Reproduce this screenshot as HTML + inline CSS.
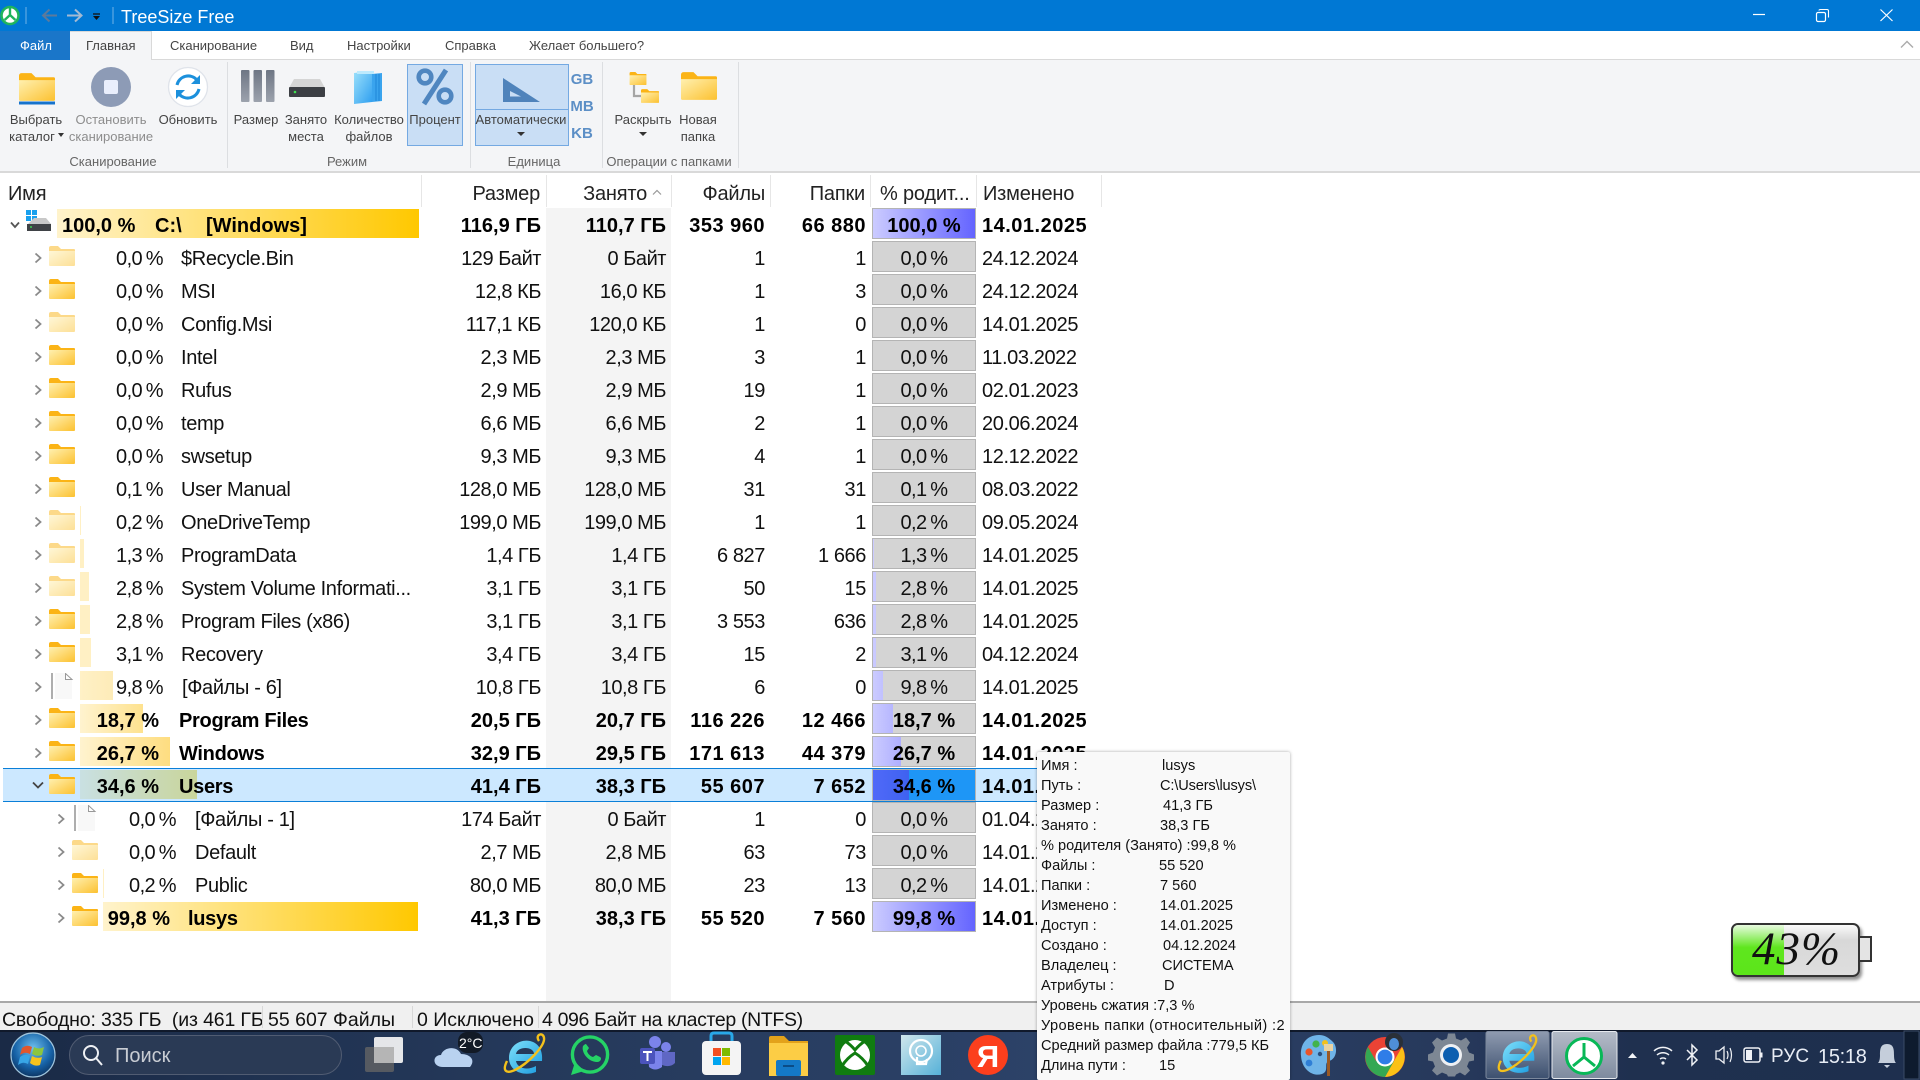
<!DOCTYPE html>
<html lang="ru"><head><meta charset="utf-8"><title>TreeSize Free</title>
<style>
*{box-sizing:border-box}
html,body{margin:0;padding:0;width:1920px;height:1080px;overflow:hidden;background:#fff;font-family:"Liberation Sans","Noto Sans CJK SC",sans-serif;color:#111}
.a{position:absolute}
svg{position:absolute;overflow:visible}
#title{left:0;top:0;width:1920px;height:31px;background:#0078d4}
#title span{position:absolute;left:121px;top:3px;font-size:18px;line-height:29px;color:#fff}
#tabs{left:0;top:31px;width:1920px;height:29px;background:#fff;border-bottom:1px solid #d9d9d9}
.tab{position:absolute;top:0;font-size:13px;line-height:29px;color:#444;white-space:nowrap}
#ribbon{left:0;top:60px;width:1920px;height:113px;background:#f4f5f7;border-bottom:2px solid #d9d9d9}
.sep{position:absolute;width:1px;top:62px;height:106px;background:#dcdee1}
.l{position:absolute;font-size:13px;line-height:18px;color:#444;text-align:center;white-space:nowrap;transform:translateX(-50%)}
.g{position:absolute;top:153px;font-size:13px;line-height:18px;color:#666;white-space:nowrap;transform:translateX(-50%)}
.act{position:absolute;background:#c9def5;border:1px solid #74a9e2}
.u{position:absolute;font-size:15px;line-height:20px;font-weight:700;color:#5c8fc6;transform:translateX(-50%)}
.h{position:absolute;top:175px;font-size:20px;line-height:38px;color:#222;white-space:nowrap;letter-spacing:-.2px}
.hs{position:absolute;top:175px;height:32px;width:1px;background:#e6e6e6}
#gray{left:546px;top:208px;width:125px;height:793px;background:#f4f4f4}
.r{position:absolute;left:0;width:1101px;height:33px;font-size:20px;line-height:36px;white-space:nowrap;color:#111}
.r.b{font-weight:700;color:#000}
.r.sel{background:#cce8ff;left:3px;width:1098px;top:768px;height:34px;border-top:1px solid #0a7fd8;border-bottom:1px solid #0a7fd8;margin:0}
.r>*{position:absolute}
.bar{top:1px;height:29px}
.pt{top:0;text-align:right;letter-spacing:-.6px;word-spacing:-1.2px;margin-left:1px}
.b .pt{letter-spacing:0;word-spacing:0;margin-left:0}
.nm{top:0;letter-spacing:-.35px}
.b .nm{letter-spacing:-.3px}
.s,.o,.f,.d{top:0;text-align:right}
.s,.o{letter-spacing:-.45px}
.f,.d,.m{letter-spacing:-.4px}
.b .s,.b .o{letter-spacing:0}
.b .f,.b .d,.b .m{letter-spacing:.5px}
.s{left:421px;width:120px}.o{left:546px;width:120px}.f{left:671px;width:94px}.d{left:770px;width:96px}
.m{left:982px;top:0}
.p{left:872px;top:0;width:104px;height:31px;background:#d4d4d4;border:1px solid #b4b4b4;text-align:center;line-height:34px}
.p i{position:absolute;left:0;top:0;height:29px;background:linear-gradient(90deg,#cbcbff,#6464ff) 0 0/102px 100% no-repeat}
.p b{position:relative;font-weight:inherit;letter-spacing:-.6px;word-spacing:-1.2px}
.b .p b{letter-spacing:0;word-spacing:0}
.fo{left:49px;top:5px;width:26px;height:20px}
.fl{opacity:.5}
.ch{left:34px;top:11px;width:8px;height:12px}
.f2 .ch{left:57px}.f2 .fo{left:72px}
#statusline{left:0;top:1001px;width:1920px;height:2px;background:#a8a8a8}
#status{left:0;top:1003px;width:1920px;height:27px;background:#f0f0f0;font-size:19.5px;line-height:34px;color:#111;white-space:nowrap}
#status span{position:absolute;top:0}
#status u{position:absolute;top:3px;width:1px;height:22px;background:#d8d8d8;text-decoration:none}
#task{left:0;top:1030px;width:1920px;height:50px;background:linear-gradient(90deg,#1a2a46 0,#243859 25%,#2c4268 55%,#27395c 75%,#1f304f 85%,#1e2f4e 100%);border-top:2px solid #10192b}
#tip{left:1037px;top:752px;width:253px;height:328px;background:#f9f9f9;box-shadow:0 0 3px rgba(0,0,0,.35);font-size:14.6px;color:#111;border-radius:2px;z-index:5}
#tip div{position:absolute;left:4px;height:20px;line-height:22px;white-space:nowrap}
#tip div b{position:absolute;top:0;font-weight:400}
.ti{position:absolute;color:#e8edf5;white-space:nowrap}
</style></head><body>
<svg width="0" height="0" style="position:absolute"><defs>
<linearGradient id="fg" x1="0" y1="0" x2="1" y2="1"><stop offset="0" stop-color="#fff0b0"/><stop offset="1" stop-color="#fcc130"/></linearGradient>
<symbol id="fold" viewBox="0 0 26 20"><path d="M0 2Q0 0 2 0H9L12 3H25Q26 3 26 4V6H0Z" fill="#fbb416"/><path d="M0 5H26V19Q26 20 25 20H1Q0 20 0 19Z" fill="url(#fg)"/></symbol>
<symbol id="chev" viewBox="0 0 8 12"><path d="M1.5 1.5 6.5 6 1.5 10.5" fill="none" stroke="#8a8a8a" stroke-width="1.8"/></symbol>
<symbol id="filei" viewBox="0 0 24 26"><path d="M1 0V26" stroke="#777" stroke-width="1.2"/><path d="M4 0H14L21 6V26H4Z" fill="#f8f8f8"/><path d="M14.5 0.5V6.5H21L14.5 .5Z" fill="#fff" stroke="#999" stroke-width="1"/></symbol>
</defs></svg>

<div class="a" id="title"><span>TreeSize Free</span></div>
<svg style="left:0;top:0" width="130" height="31">
<circle cx="10" cy="15.5" r="8.5" fill="#fff" stroke="#1fb45c" stroke-width="2.6"/><path d="M10 8V15M10 15 4.6 20M10 15 15.4 20" stroke="#1fb45c" stroke-width="2.4" fill="none"/>
<path d="M26 7V24" stroke="#6fb2e6"/><path d="M57 15.5H44M49.5 9.5 43 15.5 49.5 21.5" stroke="#5c7a9c" stroke-width="2" fill="none"/>
<path d="M67 15.5H81M75 9.5 81.5 15.5 75 21.5" stroke="#a3bad3" stroke-width="2" fill="none"/>
<path d="M93 14H100" stroke="#111" stroke-width="1.3"/><path d="M93 16H100L96.5 20Z" fill="#111"/><path d="M113 7V24" stroke="#6fb2e6"/></svg>
<svg style="left:1740px;top:0" width="170" height="31">
<path d="M13 14.5H25" stroke="#fff" stroke-width="1.2"/>
<rect x="76.5" y="12.5" width="9" height="9" rx="1.5" fill="none" stroke="#fff" stroke-width="1.2"/><path d="M79 10.5Q79 9.5 80.5 9.5H87Q88.5 9.5 88.5 11V17.5" fill="none" stroke="#fff" stroke-width="1.1"/>
<path d="M140.5 9.5 152.5 21M152.5 9.5 140.5 21" stroke="#fff" stroke-width="1.2"/></svg>

<div class="a" id="tabs">
<div class="a" style="left:0;top:0;width:70px;height:29px;background:#1a76c9"></div>
<div class="tab" style="left:20px;color:#fff">Файл</div>
<div class="a" style="left:70px;top:0;width:82px;height:29px;background:#f4f5f7;border-right:1px solid #d9d9d9;border-top:1px solid #d9d9d9"></div>
<div class="tab" style="left:86px">Главная</div>
<div class="tab" style="left:170px">Сканирование</div>
<div class="tab" style="left:290px">Вид</div>
<div class="tab" style="left:347px">Настройки</div>
<div class="tab" style="left:445px">Справка</div>
<div class="tab" style="left:529px">Желает большего?</div>
<svg style="left:1900px;top:8px" width="14" height="10"><path d="M1 8.5 7 2.5 13 8.5" fill="none" stroke="#aaa" stroke-width="1.4"/></svg>
</div>
<div class="a" id="ribbon"></div>
<div class="sep" style="left:227px"></div><div class="sep" style="left:470px"></div><div class="sep" style="left:602px"></div><div class="sep" style="left:738px"></div>
<div class="act" style="left:407px;top:64px;width:56px;height:82px"></div>
<div class="act" style="left:475px;top:64px;width:94px;height:82px"></div>
<div class="a" style="left:476px;top:109px;width:92px;height:1px;background:#74a9e2"></div>

<svg style="left:0;top:60px" width="740" height="60">
<defs><linearGradient id="bb" x1="0" y1="0" x2="0" y2="1"><stop offset="0" stop-color="#6e7684"/><stop offset="1" stop-color="#9ca2ad"/></linearGradient>
<linearGradient id="cu" x1="0" y1="0" x2="1" y2="1"><stop offset="0" stop-color="#9be0fb"/><stop offset="1" stop-color="#2f9ff0"/></linearGradient></defs>
<use href="#fold" x="19" y="13" width="36" height="28"/><rect x="19" y="41.5" width="36" height="3" fill="#1673cc"/>
<circle cx="111" cy="27" r="20" fill="#8d9bb6"/><rect x="104" y="20" width="14" height="14" rx="2" fill="#e9eefc"/>
<circle cx="188" cy="27" r="19.5" fill="#fff" stroke="#dfe3ea" stroke-width="1.3"/>
<path d="M177 25A11.5 11.5 0 0 1 197 20" fill="none" stroke="#1c90dc" stroke-width="3"/><path d="M200 15V24H191Z" fill="#1c90dc"/>
<path d="M199 29A11.5 11.5 0 0 1 179 34" fill="none" stroke="#1c90dc" stroke-width="3"/><path d="M176 39V30H185Z" fill="#1c90dc"/>
<rect x="241" y="10" width="8.5" height="32" rx="1" fill="url(#bb)"/><rect x="253.5" y="10" width="8.5" height="32" rx="1" fill="url(#bb)"/><rect x="266" y="10" width="8.5" height="32" rx="1" fill="url(#bb)"/>
<path d="M294 19H320L325 28H289Z" fill="#d5d5d5"/><rect x="289" y="27" width="36" height="10" rx="1" fill="#3c3f44"/><circle cx="295" cy="32" r="1.3" fill="#3fe04f"/>
<path d="M354 13 372 11V42L354 44Z" fill="url(#cu)"/><path d="M372 14 382 13V41L372 42Z" fill="#3aa4ee"/><path d="M357 11 374 11V14H357Z" fill="#bdeafd"/><path d="M376 14V41" stroke="#1d86d8"/><path d="M379 14V41" stroke="#1d86d8"/>
<circle cx="425" cy="17" r="6.3" fill="none" stroke="#4f86c0" stroke-width="4.6"/><circle cx="445" cy="36" r="6.3" fill="none" stroke="#4f86c0" stroke-width="4.6"/><path d="M446 10 424 44" stroke="#4f86c0" stroke-width="5"/>
<path d="M503 18V42H540Z M510 31 521 36.5H510Z" fill="#4f83bb" fill-rule="evenodd"/>
<path d="M634 25V36H642" fill="none" stroke="#a5a5a5" stroke-width="2.2"/>
<use href="#fold" x="629" y="12" width="18" height="13"/><use href="#fold" x="641" y="29" width="18" height="14"/>
<use href="#fold" x="681" y="12" width="36" height="28"/>
</svg>
<div class="l" style="left:36px;top:111px">Выбрать</div><div class="l" style="left:32px;top:128px">каталог</div>
<div class="l" style="left:111px;top:111px;color:#8d8d8d">Остановить</div><div class="l" style="left:111px;top:128px;color:#8d8d8d">сканирование</div>
<div class="l" style="left:188px;top:111px">Обновить</div>
<div class="l" style="left:256px;top:111px">Размер</div>
<div class="l" style="left:306px;top:111px">Занято</div><div class="l" style="left:306px;top:128px">места</div>
<div class="l" style="left:369px;top:111px">Количество</div><div class="l" style="left:369px;top:128px">файлов</div>
<div class="l" style="left:435px;top:111px">Процент</div>
<div class="l" style="left:521px;top:111px">Автоматически</div>
<div class="l" style="left:643px;top:111px">Раскрыть</div>
<div class="l" style="left:698px;top:111px">Новая</div><div class="l" style="left:698px;top:128px">папка</div>
<svg style="left:0;top:130px" width="740" height="12"><path d="M517 2H525L521 6ZM639 2H647L643 6ZM58 3H64L61 7Z" fill="#333"/></svg>
<div class="u" style="left:582px;top:70px">GB</div><div class="u" style="left:582px;top:97px">MB</div><div class="u" style="left:582px;top:124px">KB</div>
<div class="g" style="left:113px">Сканирование</div><div class="g" style="left:347px">Режим</div><div class="g" style="left:534px">Единица</div><div class="g" style="left:669px">Операции с папками</div>

<div class="h" style="left:8px">Имя</div>
<div class="h" style="right:1380px">Размер</div>
<div class="h" style="right:1273px">Занято</div>
<svg style="left:652px;top:189px" width="10" height="7"><path d="M1 5.5 5 1.5 9 5.5" fill="none" stroke="#999" stroke-width="1.2"/></svg>
<div class="h" style="right:1155px">Файлы</div>
<div class="h" style="right:1055px">Папки</div>
<div class="h" style="left:880px">% родит...</div>
<div class="h" style="left:983px">Изменено</div>
<div class="hs" style="left:421px"></div><div class="hs" style="left:546px"></div><div class="hs" style="left:671px"></div><div class="hs" style="left:770px"></div><div class="hs" style="left:870px"></div><div class="hs" style="left:976px"></div><div class="hs" style="left:1101px"></div>
<div class="a" id="gray"></div>

<!-- root -->
<div class="r b" style="top:208px">
<div class="bar" style="left:57px;width:362px;background:linear-gradient(90deg,#fff3cc,#ffc800)"></div>
<svg style="left:10px;top:13px" width="10" height="8"><path d="M1 1.5 5 6 9 1.5" fill="none" stroke="#555" stroke-width="1.8"/></svg>
<svg style="left:26px;top:2px" width="26" height="22"><rect x="0" y="0" width="5" height="5" fill="#18a0ee"/><rect x="6" y="0" width="5" height="5" fill="#18a0ee"/><rect x="0" y="6" width="5" height="5" fill="#18a0ee"/><rect x="6" y="6" width="5" height="5" fill="#18a0ee"/><path d="M2 14 8 8H20L25 14Z" fill="#c8c8c8"/><rect x="1" y="14" width="24" height="7" fill="#3f4246"/><circle cx="5" cy="17" r="1" fill="#38d050"/></svg>
<span class="nm" style="left:62px;letter-spacing:0">100,0 %</span><span class="nm" style="left:155px;letter-spacing:0">C:\</span><span class="nm" style="left:206px;letter-spacing:0">[Windows]</span>
<span class="s">116,9 ГБ</span><span class="o">110,7 ГБ</span><span class="f">353 960</span><span class="d">66 880</span>
<div class="p"><i style="width:102px"></i><b>100,0 %</b></div><span class="m">14.01.2025</span></div>

<div class="r" style="top:241px"><svg class="ch"><use href="#chev" width="8" height="12"/></svg><svg class="fo fl"><use href="#fold" width="26" height="20"/></svg>
<span class="pt" style="left:80px;width:82px">0,0 %</span><span class="nm" style="left:181px">$Recycle.Bin</span><span class="s">129 Байт</span><span class="o">0 Байт</span><span class="f">1</span><span class="d">1</span><div class="p"><b>0,0 %</b></div><span class="m">24.12.2024</span></div>
<div class="r" style="top:274px"><svg class="ch"><use href="#chev" width="8" height="12"/></svg><svg class="fo"><use href="#fold" width="26" height="20"/></svg>
<span class="pt" style="left:80px;width:82px">0,0 %</span><span class="nm" style="left:181px">MSI</span><span class="s">12,8 КБ</span><span class="o">16,0 КБ</span><span class="f">1</span><span class="d">3</span><div class="p"><b>0,0 %</b></div><span class="m">24.12.2024</span></div>
<div class="r" style="top:307px"><svg class="ch"><use href="#chev" width="8" height="12"/></svg><svg class="fo fl"><use href="#fold" width="26" height="20"/></svg>
<span class="pt" style="left:80px;width:82px">0,0 %</span><span class="nm" style="left:181px">Config.Msi</span><span class="s">117,1 КБ</span><span class="o">120,0 КБ</span><span class="f">1</span><span class="d">0</span><div class="p"><b>0,0 %</b></div><span class="m">14.01.2025</span></div>
<div class="r" style="top:340px"><svg class="ch"><use href="#chev" width="8" height="12"/></svg><svg class="fo"><use href="#fold" width="26" height="20"/></svg>
<span class="pt" style="left:80px;width:82px">0,0 %</span><span class="nm" style="left:181px">Intel</span><span class="s">2,3 МБ</span><span class="o">2,3 МБ</span><span class="f">3</span><span class="d">1</span><div class="p"><b>0,0 %</b></div><span class="m">11.03.2022</span></div>
<div class="r" style="top:373px"><svg class="ch"><use href="#chev" width="8" height="12"/></svg><svg class="fo"><use href="#fold" width="26" height="20"/></svg>
<span class="pt" style="left:80px;width:82px">0,0 %</span><span class="nm" style="left:181px">Rufus</span><span class="s">2,9 МБ</span><span class="o">2,9 МБ</span><span class="f">19</span><span class="d">1</span><div class="p"><b>0,0 %</b></div><span class="m">02.01.2023</span></div>
<div class="r" style="top:406px"><svg class="ch"><use href="#chev" width="8" height="12"/></svg><svg class="fo"><use href="#fold" width="26" height="20"/></svg>
<span class="pt" style="left:80px;width:82px">0,0 %</span><span class="nm" style="left:181px">temp</span><span class="s">6,6 МБ</span><span class="o">6,6 МБ</span><span class="f">2</span><span class="d">1</span><div class="p"><b>0,0 %</b></div><span class="m">20.06.2024</span></div>
<div class="r" style="top:439px"><svg class="ch"><use href="#chev" width="8" height="12"/></svg><svg class="fo"><use href="#fold" width="26" height="20"/></svg>
<span class="pt" style="left:80px;width:82px">0,0 %</span><span class="nm" style="left:181px">swsetup</span><span class="s">9,3 МБ</span><span class="o">9,3 МБ</span><span class="f">4</span><span class="d">1</span><div class="p"><b>0,0 %</b></div><span class="m">12.12.2022</span></div>
<div class="r" style="top:472px"><svg class="ch"><use href="#chev" width="8" height="12"/></svg><svg class="fo"><use href="#fold" width="26" height="20"/></svg>
<span class="pt" style="left:80px;width:82px">0,1 %</span><span class="nm" style="left:181px">User Manual</span><span class="s">128,0 МБ</span><span class="o">128,0 МБ</span><span class="f">31</span><span class="d">31</span><div class="p"><b>0,1 %</b></div><span class="m">08.03.2022</span></div>
<div class="r" style="top:505px"><div class="bar" style="left:80px;width:1px;background:#fff0c4"></div><svg class="ch"><use href="#chev" width="8" height="12"/></svg><svg class="fo fl"><use href="#fold" width="26" height="20"/></svg>
<span class="pt" style="left:80px;width:82px">0,2 %</span><span class="nm" style="left:181px">OneDriveTemp</span><span class="s">199,0 МБ</span><span class="o">199,0 МБ</span><span class="f">1</span><span class="d">1</span><div class="p"><b>0,2 %</b></div><span class="m">09.05.2024</span></div>
<div class="r" style="top:538px"><div class="bar" style="left:80px;width:4px;background:#fff0c4"></div><svg class="ch"><use href="#chev" width="8" height="12"/></svg><svg class="fo fl"><use href="#fold" width="26" height="20"/></svg>
<span class="pt" style="left:80px;width:82px">1,3 %</span><span class="nm" style="left:181px">ProgramData</span><span class="s">1,4 ГБ</span><span class="o">1,4 ГБ</span><span class="f">6 827</span><span class="d">1 666</span><div class="p"><i style="width:1px"></i><b>1,3 %</b></div><span class="m">14.01.2025</span></div>
<div class="r" style="top:571px"><div class="bar" style="left:80px;width:9px;background:#fff0c4"></div><svg class="ch"><use href="#chev" width="8" height="12"/></svg><svg class="fo fl"><use href="#fold" width="26" height="20"/></svg>
<span class="pt" style="left:80px;width:82px">2,8 %</span><span class="nm" style="left:181px">System Volume Informati...</span><span class="s">3,1 ГБ</span><span class="o">3,1 ГБ</span><span class="f">50</span><span class="d">15</span><div class="p"><i style="width:3px"></i><b>2,8 %</b></div><span class="m">14.01.2025</span></div>
<div class="r" style="top:604px"><div class="bar" style="left:80px;width:10px;background:#fff0c4"></div><svg class="ch"><use href="#chev" width="8" height="12"/></svg><svg class="fo"><use href="#fold" width="26" height="20"/></svg>
<span class="pt" style="left:80px;width:82px">2,8 %</span><span class="nm" style="left:181px">Program Files (x86)</span><span class="s">3,1 ГБ</span><span class="o">3,1 ГБ</span><span class="f">3 553</span><span class="d">636</span><div class="p"><i style="width:3px"></i><b>2,8 %</b></div><span class="m">14.01.2025</span></div>
<div class="r" style="top:637px"><div class="bar" style="left:80px;width:11px;background:#fff0c4"></div><svg class="ch"><use href="#chev" width="8" height="12"/></svg><svg class="fo"><use href="#fold" width="26" height="20"/></svg>
<span class="pt" style="left:80px;width:82px">3,1 %</span><span class="nm" style="left:181px">Recovery</span><span class="s">3,4 ГБ</span><span class="o">3,4 ГБ</span><span class="f">15</span><span class="d">2</span><div class="p"><i style="width:3px"></i><b>3,1 %</b></div><span class="m">04.12.2024</span></div>
<div class="r" style="top:670px"><div class="bar" style="left:80px;width:33px;background:linear-gradient(90deg,#fff1c6,#fdebb8)"></div><svg class="ch"><use href="#chev" width="8" height="12"/></svg><svg style="left:51px;top:3px" width="24" height="26"><use href="#filei" width="24" height="26"/></svg>
<span class="pt" style="left:80px;width:82px">9,8 %</span><span class="nm" style="left:182px">[Файлы - 6]</span><span class="s">10,8 ГБ</span><span class="o">10,8 ГБ</span><span class="f">6</span><span class="d">0</span><div class="p"><i style="width:10px"></i><b>9,8 %</b></div><span class="m">14.01.2025</span></div>
<div class="r b" style="top:703px"><div class="bar" style="left:80px;width:63px;background:linear-gradient(90deg,#fff3cf,#fee28f)"></div><svg class="ch"><use href="#chev" width="8" height="12"/></svg><svg class="fo"><use href="#fold" width="26" height="20"/></svg>
<span class="pt" style="left:80px;width:79px">18,7 %</span><span class="nm" style="left:179px">Program Files</span><span class="s">20,5 ГБ</span><span class="o">20,7 ГБ</span><span class="f">116 226</span><span class="d">12 466</span><div class="p"><i style="width:20px"></i><b>18,7 %</b></div><span class="m">14.01.2025</span></div>
<div class="r b" style="top:736px"><div class="bar" style="left:80px;width:90px;background:linear-gradient(90deg,#fff3cf,#fedd80)"></div><svg class="ch"><use href="#chev" width="8" height="12"/></svg><svg class="fo"><use href="#fold" width="26" height="20"/></svg>
<span class="pt" style="left:80px;width:79px">26,7 %</span><span class="nm" style="left:179px">Windows</span><span class="s">32,9 ГБ</span><span class="o">29,5 ГБ</span><span class="f">171 613</span><span class="d">44 379</span><div class="p"><i style="width:28px"></i><b>26,7 %</b></div><span class="m">14.01.2025</span></div>

<div class="r b sel" style="background:#cce8ff;line-height:36px">
<div style="left:77px;top:1px;width:117px;height:29px;background:linear-gradient(90deg,#c9e0e2,#c9d59b)"></div>
<svg style="left:29px;top:12px" width="12" height="8"><path d="M1 1.5 6 6.5 11 1.5" fill="none" stroke="#444" stroke-width="1.8"/></svg>
<svg style="left:46px;top:5px" width="26" height="20"><use href="#fold" width="26" height="20"/></svg>
<span class="pt" style="left:77px;width:79px">34,6 %</span><span class="nm" style="left:176px">Users</span>
<span class="s" style="left:418px">41,4 ГБ</span><span class="o" style="left:543px">38,3 ГБ</span><span class="f" style="left:668px">55 607</span><span class="d" style="left:767px">7 652</span>
<div class="p" style="left:869px;top:0;background:#1e96f6;line-height:34px;height:32px"><i style="width:36px;height:30px;background:linear-gradient(90deg,#5069f8,#3f62f0)"></i><b>34,6 %</b></div><span class="m" style="left:979px">14.01.2025</span></div>

<div class="r f2" style="top:802px"><svg class="ch"><use href="#chev" width="8" height="12"/></svg><svg style="left:74px;top:3px" width="24" height="26"><use href="#filei" width="24" height="26"/></svg>
<span class="pt" style="left:100px;width:75px">0,0 %</span><span class="nm" style="left:195px">[Файлы - 1]</span><span class="s">174 Байт</span><span class="o">0 Байт</span><span class="f">1</span><span class="d">0</span><div class="p"><b>0,0 %</b></div><span class="m">01.04.2024</span></div>
<div class="r f2" style="top:835px"><svg class="ch"><use href="#chev" width="8" height="12"/></svg><svg class="fo fl"><use href="#fold" width="26" height="20"/></svg>
<span class="pt" style="left:100px;width:75px">0,0 %</span><span class="nm" style="left:195px">Default</span><span class="s">2,7 МБ</span><span class="o">2,8 МБ</span><span class="f">63</span><span class="d">73</span><div class="p"><b>0,0 %</b></div><span class="m">14.01.2025</span></div>
<div class="r f2" style="top:868px"><div class="bar" style="left:103px;width:1px;background:#fff0c4"></div><svg class="ch"><use href="#chev" width="8" height="12"/></svg><svg class="fo"><use href="#fold" width="26" height="20"/></svg>
<span class="pt" style="left:100px;width:75px">0,2 %</span><span class="nm" style="left:195px">Public</span><span class="s">80,0 МБ</span><span class="o">80,0 МБ</span><span class="f">23</span><span class="d">13</span><div class="p"><b>0,2 %</b></div><span class="m">14.01.2025</span></div>
<div class="r b f2" style="top:901px"><div class="bar" style="left:103px;width:315px;background:linear-gradient(90deg,#fff3cc,#ffc800)"></div><svg class="ch"><use href="#chev" width="8" height="12"/></svg><svg class="fo"><use href="#fold" width="26" height="20"/></svg>
<span class="pt" style="left:100px;width:70px">99,8 %</span><span class="nm" style="left:188px">lusys</span><span class="s">41,3 ГБ</span><span class="o">38,3 ГБ</span><span class="f">55 520</span><span class="d">7 560</span><div class="p"><i style="width:102px"></i><b>99,8 %</b></div><span class="m">14.01.2025</span></div>

<!-- battery widget -->
<div class="a" style="left:1731px;top:923px;width:129px;height:54px;border:2px solid #333;border-radius:7px;background:linear-gradient(180deg,#fafafa 0,#d8d8d8 30%,#dedede 100%);box-shadow:2px 3px 3px rgba(0,0,0,.45);overflow:hidden">
<div class="a" style="left:0;top:0;width:51px;height:50px;background:linear-gradient(180deg,#e8fbe0 0,#5fe61e 45%,#5ce51a 100%)"></div></div>
<div class="a" style="left:1860px;top:936px;width:12px;height:26px;border:2px solid #333;border-left:0;background:#e4e4e4"></div>
<div class="a" style="left:1752px;top:921px;font:italic 47px/56px 'Liberation Serif',serif;color:#111;letter-spacing:1px;white-space:nowrap">43%</div>

<div class="a" id="statusline"></div>
<div class="a" id="status">
<span style="left:2px;letter-spacing:-.15px">Свободно: 335 ГБ&nbsp; (из 461 ГБ</span><u style="left:262px"></u>
<span style="left:268px">55 607 Файлы</span><u style="left:412px"></u>
<span style="left:417px">0 Исключено</span><u style="left:538px"></u>
<span style="left:542px;letter-spacing:-.35px">4 096 Байт на кластер (NTFS)</span></div>

<div class="a" id="task"></div>
<svg style="left:0;top:1030px" width="1920" height="50">
<defs>
<radialGradient id="orb" cx=".5" cy=".35" r=".7"><stop offset="0" stop-color="#6fc0ee"/><stop offset=".6" stop-color="#1763a8"/><stop offset="1" stop-color="#0b2c55"/></radialGradient>
<linearGradient id="ie" x1="0" y1="0" x2="1" y2="1"><stop offset="0" stop-color="#7fe0fa"/><stop offset="1" stop-color="#1a9be0"/></linearGradient>
<linearGradient id="app" x1="0" y1="0" x2="1" y2="1"><stop offset="0" stop-color="#cfe6ec"/><stop offset="1" stop-color="#56b1d8"/></linearGradient>
<linearGradient id="ab" x1="0" y1="0" x2="0" y2="1"><stop offset="0" stop-color="#8f9bb0"/><stop offset="1" stop-color="#3d506f"/></linearGradient>
<linearGradient id="ab2" x1="0" y1="0" x2="0" y2="1"><stop offset="0" stop-color="#b5bcc8"/><stop offset="1" stop-color="#7d8a9e"/></linearGradient>
<symbol id="ieic" viewBox="0 0 44 44"><path d="M35 28H13C14 35 24 38 33 33V39C20 44 6 38 6 25 6 12 18 6 27 8 36 10 40 18 39 28ZM31 21C31 13 14 13 13 21Z" fill="url(#ie)" fill-rule="evenodd"/><path d="M36 8C31 1 42 -2 41 7 40 14 26 30 12 37 3 41 -1 38 4 28" fill="none" stroke="#f3c11c" stroke-width="2.4"/></symbol>
</defs>
<circle cx="33" cy="25" r="22" fill="url(#orb)" stroke="#9fc4dc" stroke-width="1.2"/>
<path d="M22 18Q27 14 32 17L30 24Q25 21 20 25Z" fill="#e2572b"/><path d="M34 17Q39 20 44 17L42 25Q37 27 32 24Z" fill="#8cc63f"/><path d="M20 27Q25 23 30 26L28 34Q23 31 18 35Z" fill="#38a6e6"/><path d="M32 26Q37 29 42 27L40 35Q35 37 30 33Z" fill="#f7c31c"/>
<rect x="69.5" y="5.5" width="272" height="39" rx="19.5" fill="#2a3a55" stroke="#515c72"/>
<circle cx="91" cy="23" r="7" fill="none" stroke="#eef0f4" stroke-width="2"/><path d="M96 28 102 35" stroke="#eef0f4" stroke-width="2"/>
<rect x="365" y="17" width="29" height="25" fill="#565a61" rx="2"/><rect x="374" y="7" width="29" height="26" fill="#f4f4f4" fill-opacity=".93" rx="2"/><rect x="374" y="17" width="20" height="16" fill="#b5b5b5"/>
<path d="M443 37C432 37 432 25 441 25 443 17 457 15 461 24 470 24 476 30 470 37Z" fill="#b9d2f0"/><rect x="458" y="2" width="25" height="21" rx="9" fill="#121a26"/>
<use href="#ieic" x="503" y="3" width="44" height="44"/>
<circle cx="590" cy="24.5" r="17.6" fill="none" stroke="#25d366" stroke-width="3.4"/><path d="M575 32 571 45 584 41Z" fill="#25d366"/><path d="M583 16C581 22 588 32 597 32 601 32 602 28 600 27L596 25 593 27C590 26 588 24 587 21L589 18 586 14C585 14 584 15 583 16Z" fill="#25d366"/>
<circle cx="666" cy="17" r="5" fill="#7b83eb"/><circle cx="655" cy="12" r="6" fill="#7b83eb"/><path d="M648 21H662V37Q655 42 649 37Z" fill="#7b83eb"/><path d="M662 22H675V33Q670 38 662 35Z" fill="#5f67c4"/><rect x="640" y="18" width="15" height="16" rx="2" fill="#4b53bc"/><path d="M643 22H652M647.5 22V31" stroke="#fff" stroke-width="2"/>
<rect x="702" y="11" width="39" height="34" rx="4" fill="#f4f4f4"/><path d="M711 11V6Q711 3 714 3H729Q732 3 732 6V11" fill="none" stroke="#29a8e8" stroke-width="3"/><rect x="713" y="18" width="8" height="8" fill="#f25022"/><rect x="722" y="18" width="8" height="8" fill="#7fba00"/><rect x="713" y="27" width="8" height="8" fill="#00a4ef"/><rect x="722" y="27" width="8" height="8" fill="#ffb900"/>
<path d="M769 8Q769 6 771 6H784L789 11H808V46H769Z" fill="#e3a21a"/><rect x="769" y="13" width="39" height="33" fill="#fccd45"/><rect x="776" y="30" width="25" height="16" rx="2" fill="#1479c7"/><rect x="783" y="35" width="11" height="2" fill="#0b4c86"/>
<rect x="835" y="5" width="40" height="40" rx="2" fill="#107c10"/><circle cx="855" cy="25" r="15" fill="#fff"/><path d="M845 11Q851 15 855 20 859 15 865 11M842 36Q847 28 855 23 863 28 868 36" fill="none" stroke="#107c10" stroke-width="3"/>
<rect x="901" y="5" width="40" height="40" fill="url(#app)"/><circle cx="921" cy="21" r="11" fill="none" stroke="#fff" stroke-width="2.2"/><path d="M917 27V34H926L927 29" fill="none" stroke="#fff" stroke-width="2.2"/><circle cx="921" cy="21" r="5" fill="none" stroke="#fff" stroke-width="1.6"/>
<ellipse cx="988" cy="25" rx="20" ry="20" fill="#fc3f1d"/>
<text x="988" y="37" text-anchor="middle" font-family="Liberation Sans" font-weight="700" font-size="31" fill="#fff">Я</text>
<path d="M1319 5C1306 5 1300 15 1301 26 1302 40 1313 47 1322 44 1330 41 1323 33 1329 31 1337 29 1338 17 1333 12 1329 8 1325 5 1319 5Z" fill="#6fb4e8"/><circle cx="1309" cy="22" r="3.6" fill="#e9552a"/><circle cx="1316" cy="14" r="3.6" fill="#41b34d"/><circle cx="1320" cy="24" r="2.2" fill="#2a4f7f"/><circle cx="1309" cy="33" r="3.4" fill="#2f7fd6"/><circle cx="1325" cy="13" r="3" fill="#f3c11c"/><rect x="1327" y="20" width="3" height="26" fill="#9a5a25"/><path d="M1324 14H1333V21H1324Z" fill="#e9d3a3"/>
<circle cx="1385" cy="27" r="20" fill="#ea4335"/><path d="M1402 17A20 20 0 0 1 1385 47L1394 31Z" fill="#fbc116"/><path d="M1368 17A20 20 0 0 0 1385 47L1394 31H1376Z" fill="#34a853"/><circle cx="1385" cy="27" r="9.5" fill="#fff"/><circle cx="1385" cy="27" r="7.4" fill="#2f7de8"/><circle cx="1394" cy="12" r="9" fill="#2a3038"/><ellipse cx="1394" cy="14" rx="5" ry="6" fill="#4f8fd8"/>
<path d="M1448 6H1455L1456 11 1461 13 1466 10 1470 15 1467 20 1469 25 1474 27V33L1469 34 1467 39 1470 43 1465 48 1460 45 1456 47 1455 49H1448L1447 47 1442 45 1437 48 1432 43 1435 39 1433 34 1428 33V27L1433 25 1435 20 1432 15 1437 10 1442 13 1447 11Z" transform="translate(0 -2.5)" fill="#7d8794"/><circle cx="1451" cy="25" r="11" fill="#eef0f3"/><circle cx="1451" cy="25" r="8" fill="#0d5fb0"/>
<rect x="1486" y="1.5" width="63" height="47" rx="2" fill="url(#ab)" stroke="#7c889c"/><use href="#ieic" x="1497" y="4" width="42" height="42"/>
<rect x="1552" y="1.5" width="65" height="47" rx="2" fill="url(#ab2)" stroke="#e6e9ee"/><circle cx="1584" cy="26" r="17.5" fill="#fff" stroke="#08b857" stroke-width="3"/><path d="M1584 13V27M1584 27 1573 36M1584 27 1595 36" fill="none" stroke="#08b857" stroke-width="3"/>
<path d="M1628 28H1637L1632.5 23Z" fill="#f2f4f8"/>
<g fill="none" stroke="#f0f2f6" stroke-width="1.5"><path d="M1654 21A13 13 0 0 1 1672 21M1657 25A9 9 0 0 1 1669 25M1660 29A5 5 0 0 1 1666 29"/></g><circle cx="1663" cy="33" r="1.6" fill="#f0f2f6"/>
<path d="M1687 20 1697 30 1692 35V15L1697 20 1687 30" fill="none" stroke="#f0f2f6" stroke-width="1.5"/>
<path d="M1716 21H1719L1724 17V33L1719 29H1716Z" fill="none" stroke="#f0f2f6" stroke-width="1.3"/><path d="M1727 21Q1729 25 1727 29M1730 18Q1733 25 1730 32" fill="none" stroke="#f0f2f6" stroke-width="1.2"/>
<rect x="1744" y="18" width="16" height="14" rx="2" fill="none" stroke="#f0f2f6" stroke-width="1.5"/><rect x="1746" y="20" width="6" height="10" fill="#f0f2f6"/><rect x="1760.5" y="22.5" width="2" height="5" fill="#f0f2f6"/>
<path d="M1887 14C1880 14 1880 20 1880 25 1880 30 1879 32 1878 33H1896C1895 32 1894 30 1894 25 1894 20 1894 14 1887 14ZM1884 35H1890L1887 38Z" fill="#c5cedb"/>
<rect x="1904" y="1" width="15" height="48" fill="#0e1b2e" stroke="#3a4b66"/>
</svg>
<div class="ti" style="left:115px;top:1044px;font-size:20px;line-height:24px;color:#c8ccd3">Поиск</div>
<div class="ti" style="left:459px;top:1034px;font-size:14px;line-height:18px;color:#fff">2°C</div>
<div class="ti" style="left:1771px;top:1045px;font-size:19px;line-height:24px">РУС</div>
<div class="ti" style="left:1818px;top:1045px;font-size:20px;line-height:24px;letter-spacing:-.3px">15:18</div>

<div class="a" id="tip">
<div style="top:3px">Имя :<b style="left:121px">lusys</b></div>
<div style="top:23px">Путь :<b style="left:119px;letter-spacing:-.15px">C:\Users\lusys\</b></div>
<div style="top:43px">Размер :<b style="left:122px">41,3 ГБ</b></div>
<div style="top:63px">Занято :<b style="left:119px">38,3 ГБ</b></div>
<div style="top:83px">% родителя (Занято) :99,8 %</div>
<div style="top:103px">Файлы :<b style="left:118px">55 520</b></div>
<div style="top:123px">Папки :<b style="left:119px">7 560</b></div>
<div style="top:143px">Изменено :<b style="left:119px">14.01.2025</b></div>
<div style="top:163px">Доступ :<b style="left:119px">14.01.2025</b></div>
<div style="top:183px">Создано :<b style="left:122px">04.12.2024</b></div>
<div style="top:203px">Владелец :<b style="left:121px">СИСТЕМА</b></div>
<div style="top:223px">Атрибуты :<b style="left:123px">D</b></div>
<div style="top:243px">Уровень сжатия :7,3 %</div>
<div style="top:263px;letter-spacing:.38px">Уровень папки (относительный) :2</div>
<div style="top:283px">Средний размер файла :779,5 КБ</div>
<div style="top:303px">Длина пути :<b style="left:118px">15</b></div>
</div>
</body></html>
